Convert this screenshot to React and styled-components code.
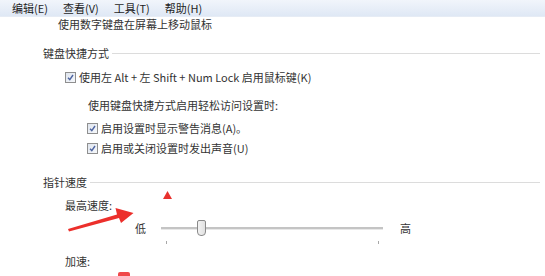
import styled, { createGlobalStyle } from "styled-components";

const GlobalStyle = createGlobalStyle`
  html, body {
    margin: 0;
    padding: 0;
    background: #ffffff;
  }
  body {
    font-family: "Noto Sans CJK SC", "Noto Sans", sans-serif;
    font-size: 11px;
    color: #333333;
  }
`;

const WINDOW = styled.div`
  position: relative;
  width: 545px;
  height: 276px;
  overflow: hidden;
  background: #ffffff;
`;

const MENU_BAR = styled.div`
  height: 17px;
  box-sizing: border-box;
  padding-left: 12px;
  display: flex;
  align-items: center;
  gap: 15px;
  background: linear-gradient(#f1f5fb, #dfe8f5);
  border-bottom: 1px solid #e6ecf5;
  & span {
    line-height: 17px;
    color: #1e1e1e;
  }
`;

const LINE = styled.div`
  height: 14px;
  line-height: 14px;
  margin-top: ${(p) => p.$mt || 0}px;
  padding-left: ${(p) => p.$pl || 0}px;
  white-space: nowrap;
  display: flex;
  align-items: center;
`;

const GROUP_HEAD = styled(LINE)`
  padding-right: 5px;
  &::after {
    content: "";
    flex: 1;
    height: 1px;
    margin-left: 3px;
    background: #dcdcdc;
  }
`;

const BOX = styled.span`
  position: relative;
  width: 11px;
  height: 11px;
  box-sizing: border-box;
  margin-right: 3px;
  border: 1px solid #8f8f8f;
  background: linear-gradient(135deg, #dfe5ee, #f6f8fb);
  flex-shrink: 0;
  & svg {
    position: absolute;
    left: 1px;
    top: 1px;
  }
`;

const SLIDER_ROW = styled.div`
  height: 18px;
  margin-top: 7px;
  padding-left: 135px;
  display: flex;
  align-items: center;
`;

const TRACK = styled.div`
  position: relative;
  width: 222px;
  height: 2px;
  margin: 0 17px 0 15px;
  background: #c4c4c4;
  border-bottom: 1px solid #e8e8e8;
  &::before,
  &::after {
    content: "";
    position: absolute;
    top: 14px;
    width: 1px;
    height: 3px;
    background: #a8a8a8;
  }
  &::before {
    left: 5px;
  }
  &::after {
    right: 4px;
  }
`;

const THUMB = styled.div`
  position: absolute;
  left: 36px;
  top: -7px;
  width: 9px;
  height: 16px;
  box-sizing: border-box;
  border: 1px solid #8a8a8a;
  border-radius: 2px 2px 4px 4px;
  background: linear-gradient(90deg, #f2f2f2, #e1e1e1);
`;

const Overlay = styled.svg`
  position: absolute;
  left: 0;
  top: 0;
  pointer-events: none;
`;

const Check = () => (
  <BOX>
    <svg width="7" height="7" viewBox="0 0 7 7">
      <path d="M1 3.8 L2.8 5.6 L6 1" fill="none" stroke="#4d63a0" strokeWidth="1.4" />
    </svg>
  </BOX>
);

export default function App() {
  return (
    <>
      <GlobalStyle />
      <WINDOW>
        <MENU_BAR>
          <span>编辑(E)</span>
          <span>查看(V)</span>
          <span>工具(T)</span>
          <span>帮助(H)</span>
        </MENU_BAR>
        <LINE $pl={58}>使用数字键盘在屏幕上移动鼠标</LINE>
        <GROUP_HEAD $mt={15} $pl={43}>键盘快捷方式</GROUP_HEAD>
        <LINE $mt={10} $pl={65}>
          <Check />
          使用左 Alt + 左 Shift + Num Lock 启用鼠标键(K)
        </LINE>
        <LINE $mt={14} $pl={88}>使用键盘快捷方式启用轻松访问设置时:</LINE>
        <LINE $mt={9} $pl={87}>
          <Check />
          启用设置时显示警告消息(A)。
        </LINE>
        <LINE $mt={6} $pl={87}>
          <Check />
          启用或关闭设置时发出声音(U)
        </LINE>
        <GROUP_HEAD $mt={20} $pl={43}>指针速度</GROUP_HEAD>
        <LINE $mt={9} $pl={65}>最高速度:</LINE>
        <SLIDER_ROW>
          <span>低</span>
          <TRACK>
            <THUMB />
          </TRACK>
          <span>高</span>
        </SLIDER_ROW>
        <LINE $mt={17} $pl={65}>加速:</LINE>

        <Overlay width="545" height="276" viewBox="0 0 545 276">
          <polygon points="163,199 172,199 167.5,191" fill="#e8322e" />
          <polygon
            points="68,229 117,214.5 115.5,208 133.5,213 121,223 119,218 69,231.5"
            fill="#ec2f2b"
          />
          <rect x="118" y="272" width="12" height="6" rx="2" fill="#f0484a" />
        </Overlay>
      </WINDOW>
    </>
  );
}
